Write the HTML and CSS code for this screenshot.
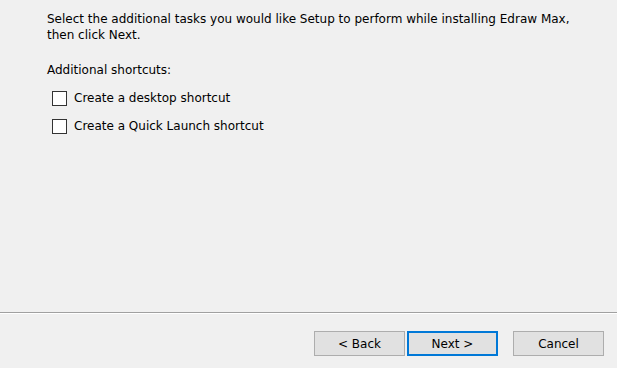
FILE: index.html
```html
<!DOCTYPE html>
<html lang="en">
<head>
    <meta charset="UTF-8">
    <title>Setup - Edraw Max</title>
    <link rel="stylesheet" href="styles.css">
</head>
<body>
    <div class="wizard">
        <!-- 任务选择区域 -->
        <div class="page">
            <p class="intro">Select the additional tasks you would like Setup to perform while installing Edraw Max,<br>then click Next.</p>
            <div class="group-title">Additional shortcuts:</div>
            <label class="check-row">
                <span class="box"></span>
                <span>Create a desktop shortcut</span>
            </label>
            <label class="check-row">
                <span class="box"></span>
                <span>Create a Quick Launch shortcut</span>
            </label>
        </div>

        <!-- 底部按钮栏 -->
        <div class="footer">
            <div class="buttons">
                <button class="btn">&lt; Back</button>
                <button class="btn default">Next &gt;</button>
                <button class="btn cancel">Cancel</button>
            </div>
        </div>
    </div>
</body>
</html>
```

FILE: styles.css
```css
/* 全局样式 */
body {
    margin: 0;
    background-color: #f0f0f0;
    font-family: 'DejaVu Sans', Verdana, sans-serif;
    font-size: 12px;
    color: #000;
}

.wizard {
    display: flex;
    flex-direction: column;
    height: 368px;
}

/* 内容区 */
.page {
    flex: 1;
    padding: 11px 0 0 47px;
}
.intro {
    margin: 0;
    line-height: 16px;
}
.group-title {
    margin-top: 19px;
    line-height: 16px;
}
.check-row {
    display: flex;
    align-items: center;
    height: 20px;
    margin-top: 8px;
    padding-left: 5px;
    gap: 7px;
}
.group-title + .check-row {
    margin-top: 10px;
}
.box {
    width: 13px;
    height: 13px;
    border: 1px solid #333;
    background-color: #fff;
}

/* 底部栏 */
.footer {
    height: 55px;
    border-top: 1px solid #a0a0a0;
    box-shadow: inset 0 1px 0 #fff;
}
.buttons {
    display: flex;
    justify-content: flex-end;
    padding: 18px 13px 0 0;
}
.btn {
    width: 91px;
    height: 25px;
    margin: 0;
    padding: 0;
    background-color: #e1e1e1;
    border: 1px solid #adadad;
    font-family: 'DejaVu Sans', Verdana, sans-serif;
    font-size: 12px;
    color: #000;
}
.btn + .btn {
    margin-left: 2px;
}
.btn.default {
    border: 2px solid #0078d7;
}
.btn.cancel {
    margin-left: 15px;
}
```
